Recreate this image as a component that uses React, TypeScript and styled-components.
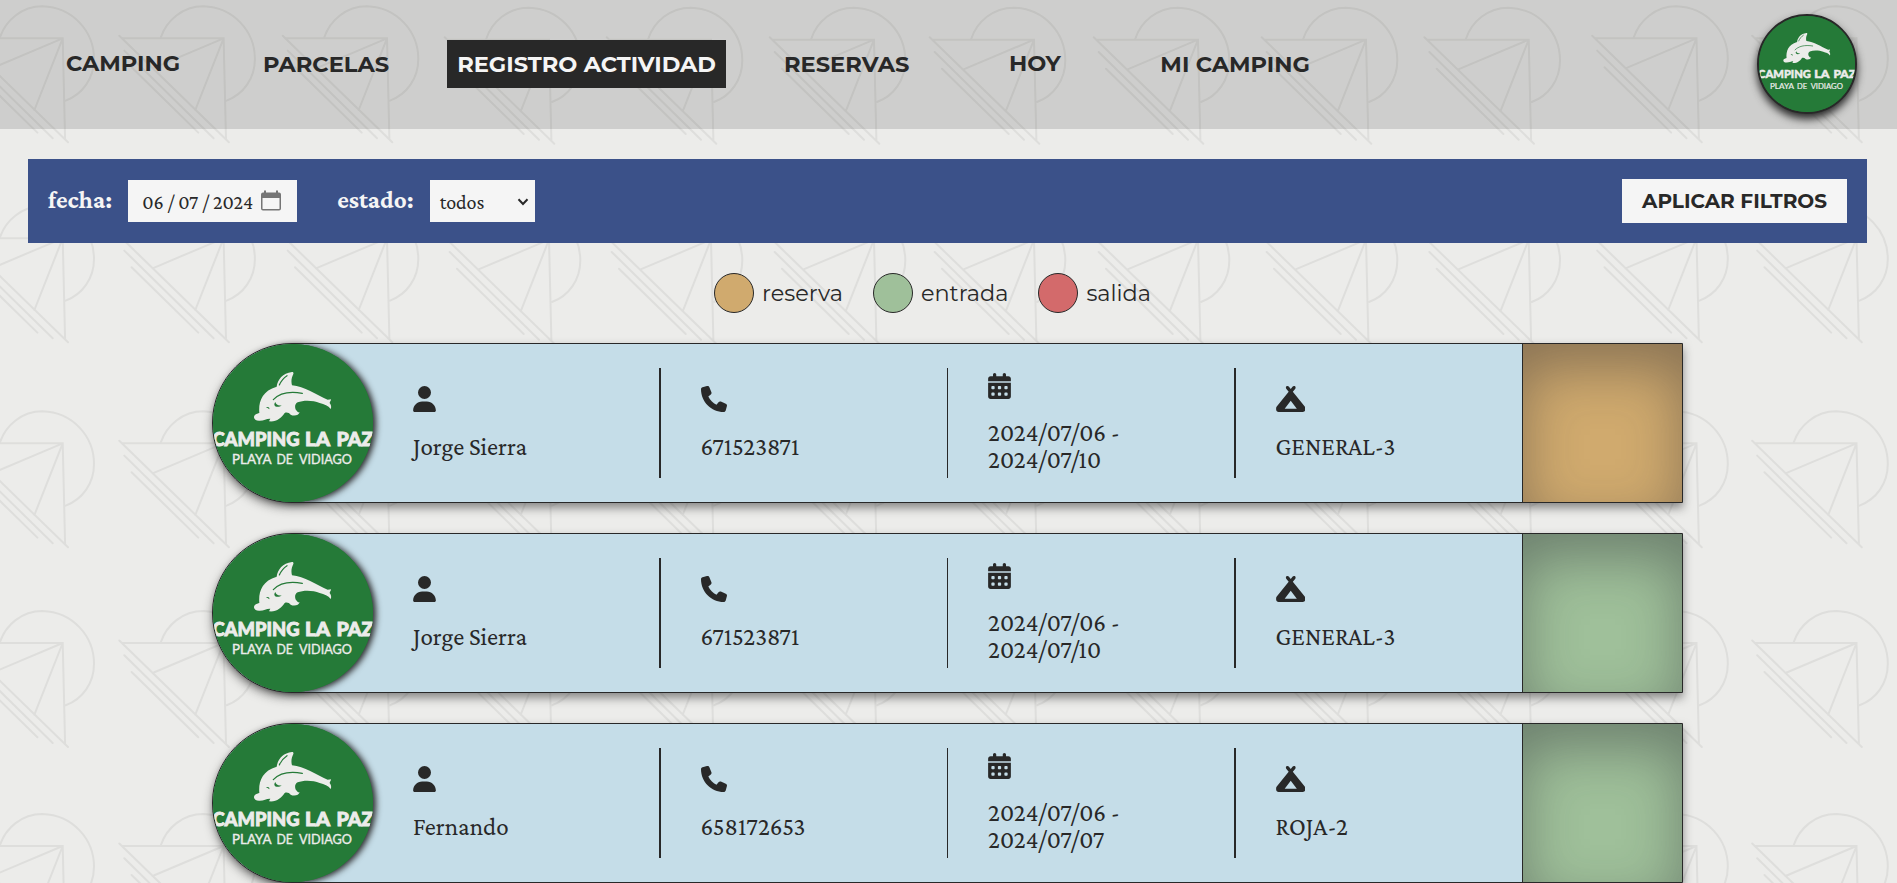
import React from 'react';
import styled, { createGlobalStyle, css } from 'styled-components';
import { FaUser, FaPhone, FaCalendarDays, FaCampground } from 'react-icons/fa6';

const ink = '#282828';
const paper = '#f5f5f5';
const green = '#257a38';
const sans = '"Montserrat", "Open Sans", sans-serif';
const serif = '"Crimson Pro", "Liberation Serif", serif';

const GlobalStyle = createGlobalStyle`
  * { box-sizing: border-box; }
  body { margin: 0; background: #ececea; color: ${ink}; font-family: ${serif}; }
`;

const Page = styled.div`
  position: relative;
  height: 883px;
  overflow: hidden;
  background: #ececea;
`;

const Backdrop = styled.svg`
  position: absolute;
  inset: 0;
  width: 100%;
  height: 100%;
  fill: none;
  stroke: #dededc;
  stroke-width: 2;
  stroke-linecap: round;
`;

const Content = styled.div`
  position: relative;
  display: flex;
  flex-direction: column;
`;

const Header = styled.header`
  display: flex;
  align-items: center;
  justify-content: space-between;
  height: 129px;
  padding: 0 40px 1px 41px;
  background: rgba(40, 40, 40, 0.148);
`;

const Nav = styled.nav`
  display: flex;
  align-items: center;
  gap: 48px;
`;

const NavItem = styled.a<{ $active?: boolean; $width?: number; $raised?: boolean }>`
  display: flex;
  justify-content: center;
  height: 48px;
  padding: ${p => (p.$raised ? '9px 10px 11px' : '10px')};
  width: ${p => (p.$width ? `${p.$width}px` : 'auto')};
  font: 700 22.55px/28px ${sans};
  white-space: nowrap;
  ${p => p.$active && css`background: ${ink}; color: ${paper};`}
`;

const Avatar = styled.div`
  width: 100px;
  height: 100px;
  border: 2px solid ${ink};
  border-radius: 50%;
  overflow: hidden;
  background: ${green};
  box-shadow: 0 5px 9px ${ink};
`;

const LogoSvg = styled.svg`
  display: block;
  width: 100%;
  height: 100%;
`;

const FilterBar = styled.form`
  display: flex;
  align-items: center;
  height: 84px;
  margin: 30px 30px 0 28px;
  padding: 0 20px;
  background: #3b5189;
`;

const FieldLabel = styled.label`
  margin-right: 16px;
  padding-bottom: 2px;
  color: ${paper};
  font: 700 25px/30px ${serif};
`;

const Field = styled.div<{ $width: number; $left: number; $right: number; $after: number }>`
  display: flex;
  align-items: center;
  justify-content: space-between;
  width: ${p => p.$width}px;
  height: 42px;
  margin-right: ${p => p.$after}px;
  padding: 1px ${p => p.$right}px 0 ${p => p.$left}px;
  background: ${paper};
  font: 400 20px/24px ${serif};
  white-space: pre;
`;

const ApplyButton = styled.button`
  height: 44px;
  margin-left: auto;
  padding: 0 20px;
  border: 0;
  background: ${paper};
  color: ${ink};
  font: 700 20px/24px ${sans};
`;

const Legend = styled.ul`
  display: flex;
  justify-content: center;
  list-style: none;
  margin: 30px 0;
  padding: 0 2px 0 0;
`;

const LegendItem = styled.li`
  display: flex;
  align-items: center;
  gap: 8px;
  height: 40px;
  margin-right: 30px;
  font: 400 22.4px/28px ${sans};
`;

const Dot = styled.span<{ $color: string }>`
  width: 40px;
  height: 40px;
  border: 1px solid ${ink};
  border-radius: 50%;
  background: ${p => p.$color};
`;

const List = styled.div`
  display: flex;
  flex-direction: column;
  gap: 30px;
  width: 1471px;
  margin: 0 auto 0 212px;
`;

const Card = styled.article`
  display: flex;
  flex: none;
  height: 160px;
  border: 1px solid ${ink};
  border-radius: 80px 0 0 80px;
  background: #c5dde8;
  box-shadow: 0 5px 10px rgba(40, 40, 40, 0.5);
`;

const CardLogo = styled.div`
  width: 160px;
  height: 158px;
  flex: none;
  border-radius: 50%;
  overflow: hidden;
  background: ${green};
  box-shadow: 3px 1px 6px ${ink};
`;

const Facts = styled.div`
  display: grid;
  grid-template-columns: repeat(4, 287.5px);
  align-items: center;
  width: 1149px;
  flex: none;
`;

const Fact = styled.div<{ $rule: number }>`
  display: flex;
  flex-direction: column;
  justify-content: center;
  gap: 21px;
  height: 110px;
  padding: 0 60px 1px 40px;
  border-right: ${p => p.$rule}px solid ${ink};
  font: 400 25px/27px ${serif};
`;

const FactIcon = styled.span<{ $width: number; $drop?: number }>`
  display: flex;
  width: ${p => p.$width}px;
  height: 26px;
  flex: none;
  margin: ${p => p.$drop ?? 0}px 0 -${p => p.$drop ?? 0}px;

  svg { width: 100%; height: 100%; }
`;

const Status = styled.div<{ $color: string }>`
  flex: 1;
  border-left: 1px solid ${ink};
  background: ${p => p.$color};
  box-shadow: inset 0 24px 55px rgba(40, 40, 50, 0.42);
`;

const columns = [62.7, 223.6, 387, 549, 711, 874, 1034, 1198, 1366, 1528.7, 1696.5, 1856.5];
const rows = [38.3, 238.3, 443.3, 643, 846];

const Tents = () => (
  <Backdrop>
    <defs>
      <g id="tent">
        <path d="M-104.3-2.5 5.3 104M-101.5 0H0L2.4 101M0 0-71 30M0 0-28.3 71.7M-99.3 12.3-10 100M-92 29-25.3 94.3" />
        <path d="M-62.7-1C-57-18-41-32-20.3-32 10-31 31.3-7 31.3 20.7 31.3 40 20 56 3 62.3" />
      </g>
    </defs>
    {rows.map(y => columns.map((x, i) => (
      <use key={`${x}-${y}`} href="#tent" x={x} y={i > 2 && i < 10 && y < 300 ? y + 1.4 : y} />
    )))}
  </Backdrop>
);

const Logo = () => (
  <LogoSvg viewBox="0 0 160 158" preserveAspectRatio="xMidYMid slice">
    <rect width="160" height="158" fill={green} />
    <g transform="translate(32 21) scale(.3333)">
      <path
        fill="#ececea"
        d="M27 157C27 149 34 147 43 144C40 112 50 78 95 65C98 44 113 24 141 21C145 21 146 23 145 27C139 39 138 50 141 61C178 64 214 90 248 104L258 103C258 108 254 111 254 114C258 119 260 126 257 132C250 122 238 118 224 114C205 106 176 105 158 112C148 117 149 130 154 136C157 141 160 143 164 142C162 151 147 155 137 149C132 144 126 141 119 144C111 158 93 172 72 169L76 161C65 160 56 168 42 167C33 167 27 163 27 157Z"
      />
      <path
        fill="none"
        stroke={green}
        strokeLinecap="round"
        strokeWidth="3.6"
        d="M85 104C101 87 132 78 172 85M103 60C108 48 117 38 126 32"
      />
      <path fill={green} d="M63 127C68 124 75 126 73 133Q68 128 63 127ZM91 111C93 119 100 123 110 121C104 127 90 128 88 119C88 116 89 113 91 111Z" />
    </g>
    <g fill="#ececea" stroke="#ececea" fontFamily="Lato, sans-serif">
      <g fontWeight="900" fontSize="19.5" strokeWidth=".9">
        <text x="-.5" y="102" textLength="87" lengthAdjust="spacingAndGlyphs">CAMPING</text>
        <text x="92" y="102" textLength="25" lengthAdjust="spacingAndGlyphs">LA</text>
        <text x="123.500" y="102" textLength="37" lengthAdjust="spacingAndGlyphs">PAZ</text>
      </g>
      <g fontWeight="400" fontSize="13.2" strokeWidth=".35">
        <text x="19" y="120" textLength="39.500" lengthAdjust="spacingAndGlyphs">PLAYA</text>
        <text x="63.500" y="120" textLength="16.500" lengthAdjust="spacingAndGlyphs">DE</text>
        <text x="86" y="120" textLength="53" lengthAdjust="spacingAndGlyphs">VIDIAGO</text>
      </g>
    </g>
  </LogoSvg>
);

const CalendarIcon = () => (
  <svg width="20" height="23" viewBox="0 0 20 23">
    <path fill="#757575" fillRule="evenodd" d="M3 .5h2v2h10v-2h2v2h1a2 2 0 0 1 2 2V18.500a2 2 0 0 1-2 2H2a2 2 0 0 1-2-2V4.500a2 2 0 0 1 2-2h1zM1.500 8v10.500q0 .5.5.5h16q.5 0 .5-.5V8z" />
  </svg>
);

const Chevron = () => (
  <svg width="12" height="8" viewBox="0 0 12 8">
    <path d="M1.500 1.200 6 6l4.500-4.800" fill="none" stroke={ink} strokeWidth="2" />
  </svg>
);

const colors = { reserva: '#d0aa6e', entrada: '#9fc09a', salida: '#d36a6b' };
type State = keyof typeof colors;

const records: { name: string; phone: string; from: string; to: string; plot: string; state: State }[] = [
  { name: 'Jorge Sierra', phone: '671523871', from: '2024/07/06', to: '2024/07/10', plot: 'GENERAL-3', state: 'reserva' },
  { name: 'Jorge Sierra', phone: '671523871', from: '2024/07/06', to: '2024/07/10', plot: 'GENERAL-3', state: 'entrada' },
  { name: 'Fernando', phone: '658172653', from: '2024/07/06', to: '2024/07/07', plot: 'ROJA-2', state: 'entrada' },
];

export default function App() {
  return (
    <Page>
      <GlobalStyle />
      <Tents />
      <Content>
        <Header>
          <Nav>
            <NavItem $width={164} $raised>CAMPING</NavItem>
            <NavItem>PARCELAS</NavItem>
            <NavItem $active>REGISTRO ACTIVIDAD</NavItem>
            <NavItem>RESERVAS</NavItem>
            <NavItem $width={135} $raised>HOY</NavItem>
            <NavItem>MI CAMPING</NavItem>
          </Nav>
          <Avatar><Logo /></Avatar>
        </Header>

        <FilterBar>
          <FieldLabel>fecha:</FieldLabel>
          <Field $width={169} $left={14} $right={16} $after={40}>
            <span>06 / 07 / 2024</span>
            <CalendarIcon />
          </Field>
          <FieldLabel>estado:</FieldLabel>
          <Field $width={105} $left={10} $right={6} $after={0}>
            <span>todos</span>
            <Chevron />
          </Field>
          <ApplyButton type="button">APLICAR FILTROS</ApplyButton>
        </FilterBar>

        <Legend>
          {(Object.keys(colors) as State[]).map(s => (
            <LegendItem key={s}><Dot $color={colors[s]} />{s}</LegendItem>
          ))}
        </Legend>

        <List>
          {records.map((r, i) => (
            <Card key={i}>
              <CardLogo><Logo /></CardLogo>
              <Facts>
                <Fact $rule={2}><FactIcon $width={23}><FaUser /></FactIcon>{r.name}</Fact>
                <Fact $rule={1}><FactIcon $width={26}><FaPhone /></FactIcon>{r.phone}</Fact>
                <Fact $rule={2}><FactIcon $width={23} $drop={1}><FaCalendarDays /></FactIcon>{`${r.from} - ${r.to}`}</Fact>
                <Fact $rule={0}><FactIcon $width={29.5}><FaCampground /></FactIcon>{r.plot}</Fact>
              </Facts>
              <Status $color={colors[r.state]} />
            </Card>
          ))}
        </List>
      </Content>
    </Page>
  );
}
